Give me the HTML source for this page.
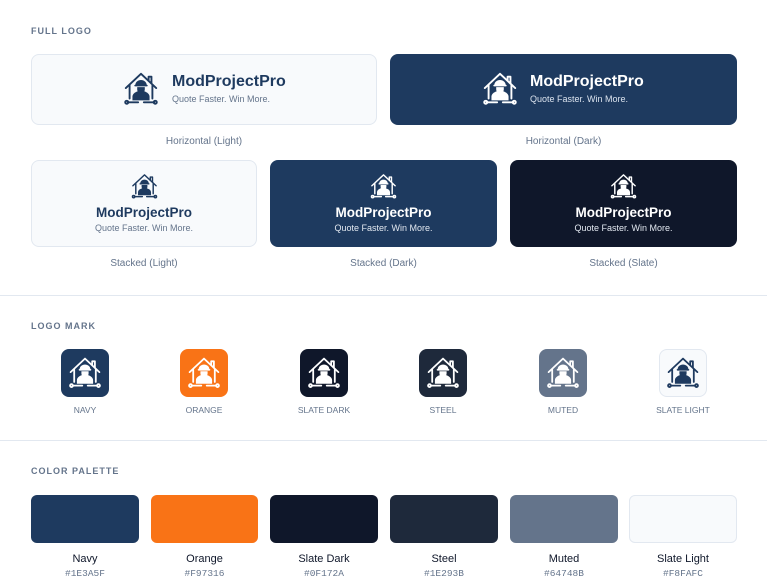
<!DOCTYPE html>
<html><head><meta charset="utf-8"><style>
*{box-sizing:border-box;margin:0;padding:0}
body{width:767px;height:588px;background:#fff;font-family:"Liberation Sans",sans-serif;position:relative;overflow:hidden}
.a{position:absolute}
.lbl{font-size:9px;font-weight:bold;letter-spacing:1px;color:#64748b}
.card{position:absolute;border-radius:8px}
.cap{position:absolute;font-size:10px;color:#64748b;text-align:center}
.hr{position:absolute;left:0;width:767px;height:1px;background:#e2e8f0}
.mk{position:absolute;width:48px;height:48px;border-radius:8px;top:349px}
.mk svg{position:absolute;left:6px;top:6px;width:36px;height:36px}
.ml{position:absolute;top:405px;width:120px;text-align:center;font-size:8.5px;color:#64748b;letter-spacing:0}
.sw{position:absolute;top:495px;height:48px;border-radius:6px}
.sn{position:absolute;top:553px;text-align:center;font-size:11px;color:#0f172a}
.sh{position:absolute;top:568px;text-align:center;font-size:9.5px;color:#64748b;font-family:"Liberation Mono",monospace}
.t1{font-weight:bold;white-space:nowrap}
.t2{white-space:nowrap}
</style></head><body>
<svg width="0" height="0" style="position:absolute"><defs><symbol id="m" viewBox="0 0 40 40">
<g fill="none" stroke="currentColor" stroke-width="2" stroke-linecap="round" stroke-linejoin="round">
<path d="M4 19 L20 4 L36 19"/><path d="M28 11 V7 H31 V14"/><path d="M8 16 V30 M32 16 V30"/>
<path d="M6 34 H17 M23 34 H34"/><circle cx="5" cy="34" r="1.6"/><circle cx="35" cy="34" r="1.6"/>
</g>
<g fill="currentColor"><path d="M14 16 a6 5.5 0 0 1 12 0 z"/><rect x="13" y="15.5" width="14" height="1.8" rx=".9"/>
<path d="M16 18 h8 v2.5 a4 4 0 0 1 -8 0 z"/><path d="M11 32 v-4 a9 6 0 0 1 18 0 V32 z"/></g>
</symbol></defs></svg>

<div class="a lbl" style="left:31px;top:26px">FULL LOGO</div>
<div class="card" style="left:31px;top:54px;width:346px;height:71px;background:#f8fafc;border:1px solid #e2e8f0"></div>
<svg class="a" style="left:122px;top:70px;width:38px;height:38px;color:#1e3a5f"><use href="#m"/></svg>
<div class="a t1" style="left:172px;top:73px;font-size:16px;color:#1e3a5f">ModProjectPro</div>
<div class="a t2" style="left:172px;top:94px;font-size:9px;color:#64748b">Quote Faster. Win More.</div>
<div class="cap" style="left:31px;top:136px;width:346px">Horizontal (Light)</div>

<div class="card" style="left:390px;top:54px;width:347px;height:71px;background:#1e3a5f"></div>
<svg class="a" style="left:481px;top:70px;width:38px;height:38px;color:#fff"><use href="#m"/></svg>
<div class="a t1" style="left:530px;top:73px;font-size:16px;color:#fff">ModProjectPro</div>
<div class="a t2" style="left:530px;top:94px;font-size:9px;color:#dbe3ee">Quote Faster. Win More.</div>
<div class="cap" style="left:390px;top:136px;width:347px">Horizontal (Dark)</div>

<div class="card" style="left:31px;top:160px;width:226px;height:87px;background:#f8fafc;border:1px solid #e2e8f0"></div>
<div class="card" style="left:270px;top:160px;width:227px;height:87px;background:#1e3a5f"></div>
<div class="card" style="left:510px;top:160px;width:227px;height:87px;background:#0f172a"></div>
<svg class="a" style="left:130px;top:172px;width:29px;height:29px;color:#1e3a5f"><use href="#m"/></svg>
<svg class="a" style="left:369px;top:172px;width:29px;height:29px;color:#fff"><use href="#m"/></svg>
<svg class="a" style="left:609px;top:172px;width:29px;height:29px;color:#fff"><use href="#m"/></svg>
<div class="a t1" style="left:31px;width:226px;text-align:center;top:205px;font-size:13.5px;color:#1e3a5f">ModProjectPro</div>
<div class="a t1" style="left:270px;width:227px;text-align:center;top:205px;font-size:13.5px;color:#fff">ModProjectPro</div>
<div class="a t1" style="left:510px;width:227px;text-align:center;top:205px;font-size:13.5px;color:#fff">ModProjectPro</div>
<div class="a t2" style="left:31px;width:226px;text-align:center;top:223px;font-size:9px;color:#64748b">Quote Faster. Win More.</div>
<div class="a t2" style="left:270px;width:227px;text-align:center;top:223px;font-size:9px;color:#e2e8f0">Quote Faster. Win More.</div>
<div class="a t2" style="left:510px;width:227px;text-align:center;top:223px;font-size:9px;color:#e2e8f0">Quote Faster. Win More.</div>
<div class="cap" style="left:31px;top:258px;width:226px">Stacked (Light)</div>
<div class="cap" style="left:270px;top:258px;width:227px">Stacked (Dark)</div>
<div class="cap" style="left:510px;top:258px;width:227px">Stacked (Slate)</div>

<div class="hr" style="top:295px"></div>
<div class="a lbl" style="left:31px;top:321px">LOGO MARK</div>
<div class="mk" style="left:61px;background:#1e3a5f;color:#fff"><svg><use href="#m"/></svg></div>
<div class="mk" style="left:180px;background:#f97316;color:#fff"><svg><use href="#m"/></svg></div>
<div class="mk" style="left:300px;background:#0f172a;color:#fff"><svg><use href="#m"/></svg></div>
<div class="mk" style="left:419px;background:#1e293b;color:#fff"><svg><use href="#m"/></svg></div>
<div class="mk" style="left:539px;background:#64748b;color:#fff"><svg><use href="#m"/></svg></div>
<div class="mk" style="left:659px;background:#f8fafc;border:1px solid #e2e8f0;color:#1e3a5f"><svg style="left:5px;top:5px"><use href="#m"/></svg></div>
<div class="ml" style="left:25px">NAVY</div>
<div class="ml" style="left:144px">ORANGE</div>
<div class="ml" style="left:264px">SLATE DARK</div>
<div class="ml" style="left:383px">STEEL</div>
<div class="ml" style="left:503px">MUTED</div>
<div class="ml" style="left:623px">SLATE LIGHT</div>

<div class="hr" style="top:440px"></div>
<div class="a lbl" style="left:31px;top:466px">COLOR PALETTE</div>
<div class="sw" style="left:31px;width:108px;background:#1e3a5f"></div>
<div class="sw" style="left:151px;width:107px;background:#f97316"></div>
<div class="sw" style="left:270px;width:108px;background:#0f172a"></div>
<div class="sw" style="left:390px;width:108px;background:#1e293b"></div>
<div class="sw" style="left:510px;width:108px;background:#64748b"></div>
<div class="sw" style="left:629px;width:108px;background:#f8fafc;border:1px solid #e2e8f0"></div>
<div class="sn" style="left:31px;width:108px">Navy</div>
<div class="sn" style="left:151px;width:107px">Orange</div>
<div class="sn" style="left:270px;width:108px">Slate Dark</div>
<div class="sn" style="left:390px;width:108px">Steel</div>
<div class="sn" style="left:510px;width:108px">Muted</div>
<div class="sn" style="left:629px;width:108px">Slate Light</div>
<div class="sh" style="left:31px;width:108px">#1E3A5F</div>
<div class="sh" style="left:151px;width:107px">#F97316</div>
<div class="sh" style="left:270px;width:108px">#0F172A</div>
<div class="sh" style="left:390px;width:108px">#1E293B</div>
<div class="sh" style="left:510px;width:108px">#64748B</div>
<div class="sh" style="left:629px;width:108px">#F8FAFC</div>
</body></html>
